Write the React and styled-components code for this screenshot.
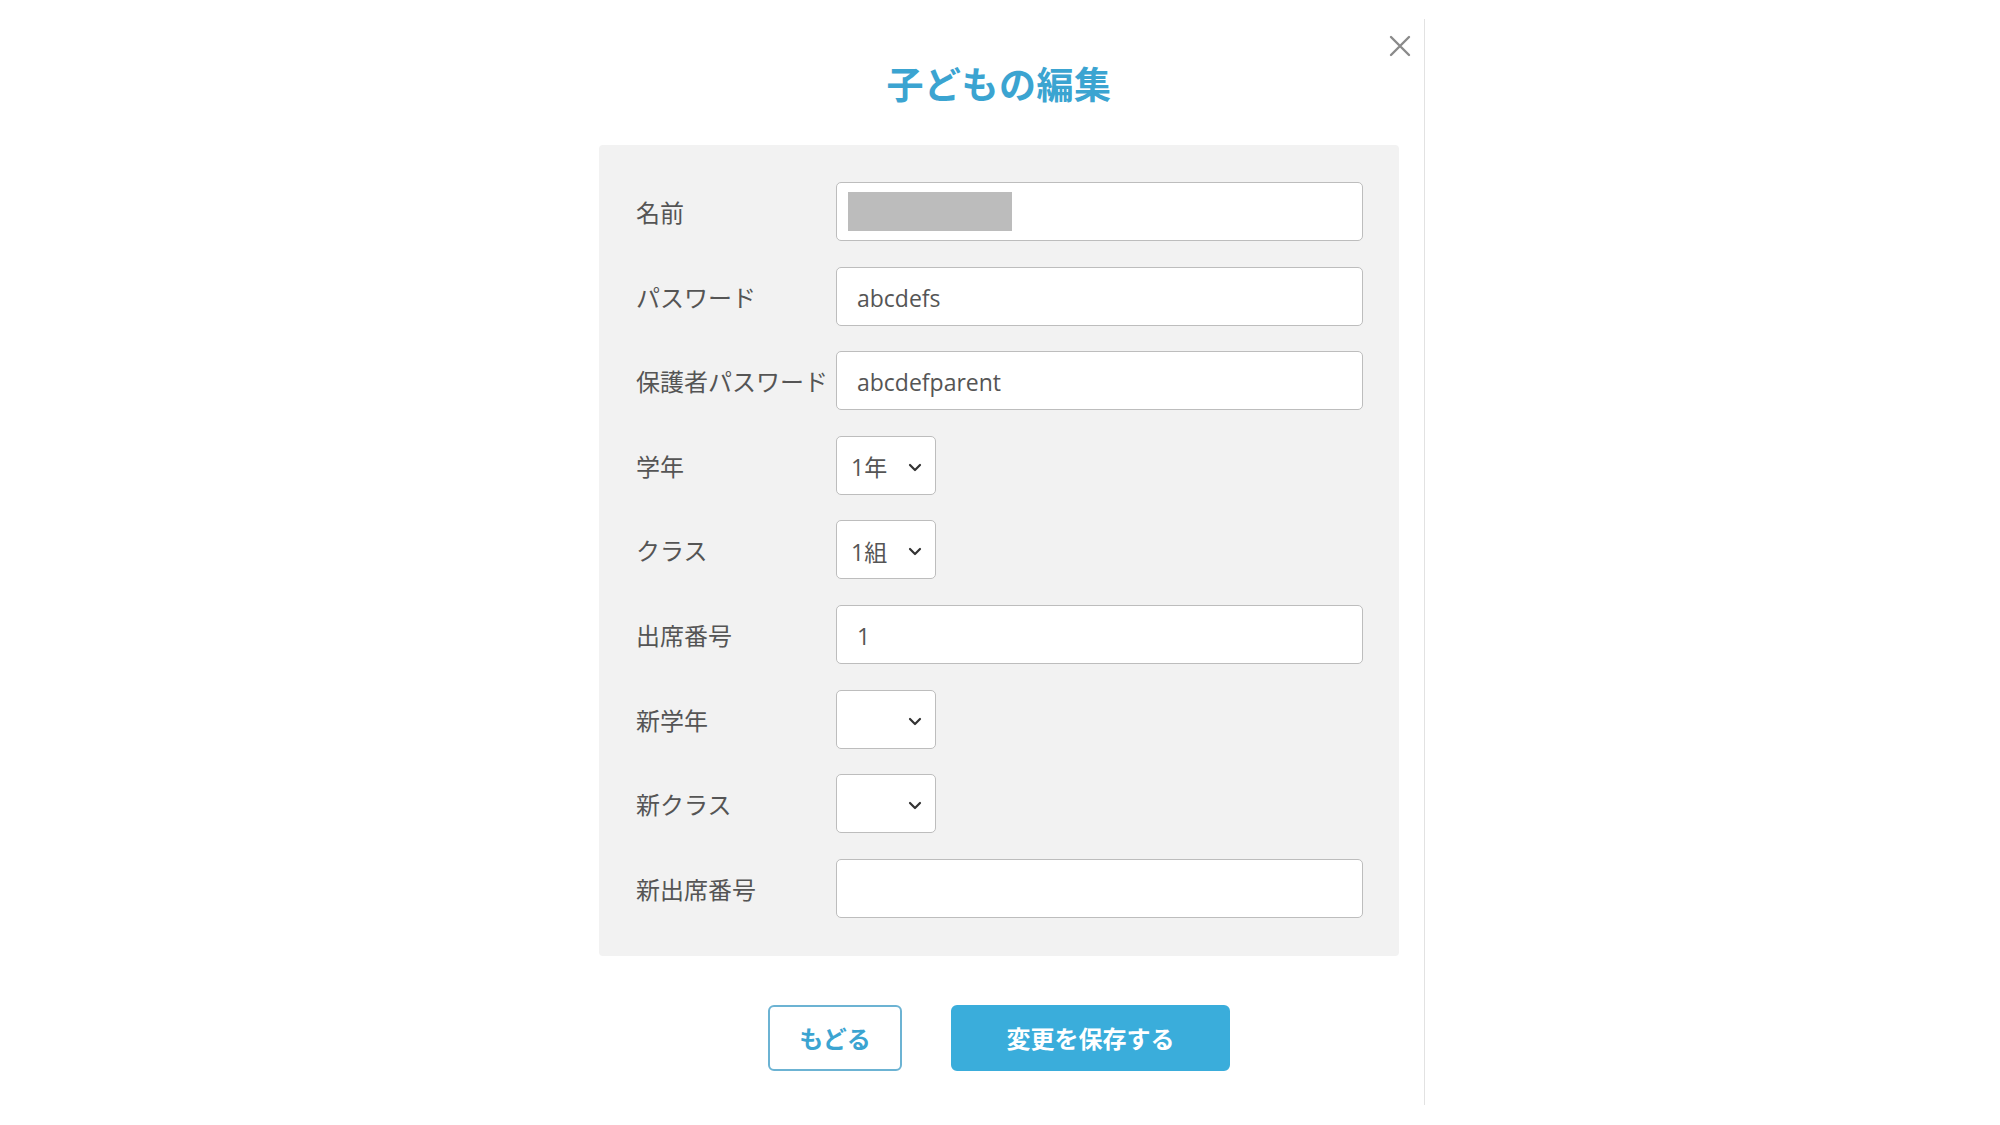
import React from 'react';
import styled, { createGlobalStyle } from 'styled-components';

const GlobalStyle = createGlobalStyle`
    body {
        margin: 0;
        background: #ffffff;
        font-family: "Noto Sans", "Noto Sans CJK JP", sans-serif;
        color: #555555;
    }
`;

const rows = [
    { label: '名前', kind: 'masked' },
    { label: 'パスワード', kind: 'text', value: 'abcdefs' },
    { label: '保護者パスワード', kind: 'text', value: 'abcdefparent' },
    { label: '学年', kind: 'select', value: '1年' },
    { label: 'クラス', kind: 'select', value: '1組' },
    { label: '出席番号', kind: 'text', value: '1' },
    { label: '新学年', kind: 'select', value: '' },
    { label: '新クラス', kind: 'select', value: '' },
    { label: '新出席番号', kind: 'text', value: '' },
];

function Chevron() {
    return (
        <svg width="14" height="9" viewBox="0 0 14 9">
            <path d="M2 2 L7 7 L12 2" fill="none" stroke="#333" strokeWidth="2.2" strokeLinecap="round" strokeLinejoin="round" />
        </svg>
    );
}

function Field({ row }) {
    if (row.kind === 'select') {
        return (
            <SelectBox>
                <span>{row.value}</span>
                <Chevron />
            </SelectBox>
        );
    }
    return (
        <TextBox>
            {row.kind === 'masked' ? <Mask /> : row.value}
        </TextBox>
    );
}

function App() {
    return (
        <>
            <GlobalStyle />
            <Page>
                <Modal>
                    <CloseButton aria-label="close">
                        <svg width="22" height="22" viewBox="0 0 22 22">
                            <path d="M2 2 L20 20 M20 2 L2 20" stroke="#8a8a8a" strokeWidth="2.4" strokeLinecap="round" />
                        </svg>
                    </CloseButton>
                    <Title>子どもの編集</Title>
                    <Panel>
                        {rows.map((row) => (
                            <Row key={row.label}>
                                <Label>{row.label}</Label>
                                <Field row={row} />
                            </Row>
                        ))}
                    </Panel>
                    <Actions>
                        <Button>もどる</Button>
                        <Button primary>変更を保存する</Button>
                    </Actions>
                </Modal>
            </Page>
        </>
    );
}

export default App;

const Page = styled.div`
    box-sizing: border-box;
    width: 100%;
    height: 1125px;
    padding-right: 1px;
    display: flex;
    justify-content: center;
    align-items: flex-start;
`;

const Modal = styled.div`
    position: relative;
    width: 850px;
    height: 1086px;
    margin-top: 19px;
    border-right: 1px solid #e2e2e2;
    display: flex;
    flex-direction: column;
    align-items: center;
`;

const CloseButton = styled.button`
    position: absolute;
    top: 16px;
    right: 13px;
    width: 22px;
    height: 22px;
    padding: 0;
    border: none;
    background: none;
    cursor: pointer;
    svg {
        display: block;
    }
`;

const Title = styled.h1`
    margin: 42px 0 0;
    font-family: "Noto Sans CJK JP", sans-serif;
    font-size: 37px;
    line-height: 44px;
    font-weight: 700;
    color: #3ba4d1;
    letter-spacing: 0.5px;
`;

const Panel = styled.div`
    box-sizing: border-box;
    width: 800px;
    margin-top: 40px;
    padding: 37px 36px 38px 37px;
    background: #f2f2f2;
    border-radius: 4px;
    display: flex;
    flex-direction: column;
    gap: 25.6px;
`;

const Row = styled.div`
    display: flex;
    align-items: center;
    height: 59px;
`;

const Label = styled.div`
    width: 200px;
    flex-shrink: 0;
    font-family: "Noto Sans CJK JP", sans-serif;
    font-size: 24px;
    color: #555555;
    white-space: nowrap;
`;

const TextBox = styled.div`
    box-sizing: border-box;
    width: 527px;
    height: 59px;
    padding: 3px 20px 0;
    display: flex;
    align-items: center;
    background: #ffffff;
    border: 1.5px solid #bdbdbd;
    border-radius: 5px;
    font-family: "Open Sans", "Noto Sans CJK JP", sans-serif;
    font-size: 23px;
    color: #555555;
`;

const Mask = styled.div`
    width: 164px;
    height: 39px;
    margin: -3px 0 0 -9px;
    background: #bcbcbc;
`;

const SelectBox = styled.div`
    box-sizing: border-box;
    width: 100px;
    height: 59px;
    padding: 2px 13px 0 14px;
    display: flex;
    align-items: center;
    justify-content: space-between;
    background: #ffffff;
    border: 1.5px solid #bdbdbd;
    border-radius: 5px;
    font-family: "Open Sans", "Noto Sans CJK JP", sans-serif;
    font-size: 23px;
    color: #555555;
    svg {
        display: block;
        margin-top: 2px;
    }
`;

const Actions = styled.div`
    display: flex;
    gap: 49px;
    margin-top: 49px;
`;

const Button = styled.button`
    box-sizing: border-box;
    height: 66px;
    width: ${(p) => (p.primary ? '279px' : '134px')};
    border-radius: 6px;
    border: 2px solid ${(p) => (p.primary ? '#3aaddb' : '#6cb3d3')};
    background: ${(p) => (p.primary ? '#3aaddb' : '#ffffff')};
    color: ${(p) => (p.primary ? '#ffffff' : '#3ba4d1')};
    font-family: "Noto Sans CJK JP", sans-serif;
    font-size: 24px;
    font-weight: 700;
    cursor: pointer;
`;
